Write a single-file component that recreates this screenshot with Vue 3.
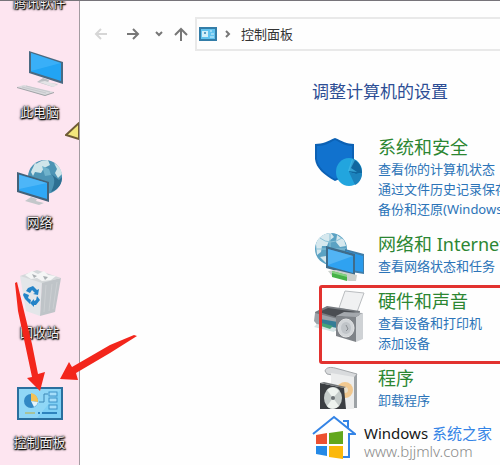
<template>
  <div class="screen">
    <!-- 桌面图标 -->
    <aside class="desktop">
      <a class="shortcut" href="#">腾讯软件</a>
      <a class="shortcut" href="#">
        <svg class="pic" viewBox="0 0 46 46">
          <path d="M12 1 46 12V34L12 23Z" fill="#4a6a82" />
          <path d="M14 3 44 13V31L14 21.500Z" fill="#22a4f4" />
          <path d="M14 3 44 13 14 21Z" fill="#4ab8fa" opacity=".6" />
          <path d="M26 28 32 30 31 33 41 34 36 37 20 32Z" fill="#bcbfc3" />
          <path d="M22 32 28 31 41 35 36 37Z" fill="#e4e4e6" />
          <path d="M7 35 37 42 28 46 0 37Z" fill="#d9dadd" />
          <path d="M0 37 28 45 37 42V43L28 46 0 38Z" fill="#9fa2a6" />
          <path d="M5 37 29 43M9 36 33 42" stroke="#c6c8cc" fill="none" />
        </svg>
        此电脑
      </a>
      <a class="shortcut" href="#">
        <svg class="pic" viewBox="0 0 46 46">
          <circle cx="28" cy="17" r="17" fill="#4d94b5" />
          <path d="M14 12C17 3 24 0 31 0L33 5 27 8 24 13 18 12 16 16ZM37 3C42 6 44 9 45 14L41 18 38 13 40 9ZM18 3 24 6 20 11 15 10Z" fill="#cfe5ea" />
          <path d="M33 13C38 17 39 22 34 32 42 29 45 24 45 17L42 20Z" fill="#2e6f92" />
          <path d="M25 6 32 9 34 15 28 16Z" fill="#70b3cc" />
          <path d="M0 12 32 22V42L0 32Z" fill="#436279" />
          <path d="M2 14.500 30 23V39L2 30.500Z" fill="#2fa8f5" />
          <path d="M2 15 30 23 2 29Z" fill="#62bffa" opacity=".6" />
          <path d="M14 37 20 39 19 41 27 43 22 45 8 41Z" fill="#c3c7ca" />
        </svg>
        网络
      </a>
      <a class="shortcut" href="#">
        <svg class="pic" viewBox="0 0 46 46">
          <path d="M3 6 25 12 23 46 9 41Z" fill="#e3e6e9" />
          <path d="M25 12 44 8 38 42 23 46Z" fill="#bfc4c8" />
          <path d="M3 6 20 0 44 8 25 13Z" fill="#d4d8da" />
          <path d="M8 5 15 1 21 4 27 1 31 5 39 6 34 10 25 11 20 8 14 9Z" fill="#f5f6f6" />
          <path d="M15 4 20 6 17 8ZM26 6 31 7 28 10Z" fill="#a9afb2" />
          <path d="M29 15 27 42M35 14 32 41M40 12 36 39" stroke="#cbcfd2" />
          <g fill="#2484c8">
            <path d="M11 18 16 16 20 20 22 19 21 25 16 24 18 23 15 20 13 23 9 21Z" />
            <path d="M7 23 12 25 11 28 14 30 13 34 8 29 6 25Z" />
            <path d="M20 26 23 30 19 35 17 35V37L13 33 17 29V31L19 30Z" />
          </g>
        </svg>
        回收站
      </a>
      <a class="shortcut" href="#">
        <svg class="pic" viewBox="0 0 46 46">
          <rect x="1" y="8" width="44" height="31" fill="#7fd0f5" stroke="#2a6f9e" stroke-width="2" />
          <path d="M2 9H44L20 38H2Z" fill="#a1def8" opacity=".5" />
          <circle cx="14" cy="21" r="7" fill="#3288c4" />
          <path d="M14 21V13A8 8 0 0 1 21 22Z" fill="#f4c255" />
          <path d="M14 21 21 22A7 7 0 0 1 17 27Z" fill="#e5f4fa" />
          <path d="M22 22H27V14H31" fill="none" stroke="#3c87b5" />
          <g fill="#a5defa" stroke="#3d92c8">
            <rect x="32" y="12" width="8" height="4" />
            <rect x="32" y="18" width="8" height="4" />
            <rect x="32" y="25" width="8" height="4" />
          </g>
          <path d="M8 33H18" stroke="#a8c39a" stroke-width="2" />
          <path d="M21 33H23M25 33H40" stroke="#2d83bd" stroke-width="2" />
        </svg>
        控制面板
      </a>
      <svg class="corner" viewBox="0 0 14 18">
        <path d="M1 13 14 1V17Z" fill="#f3e67c" stroke="#6f5b36" stroke-width="2" />
      </svg>
    </aside>

    <!-- 控制面板窗口 -->
    <main class="window">
      <nav class="toolbar">
        <button class="tool back" aria-label="后退">
          <svg viewBox="0 0 14 14"><path d="M13 7H2M7 2 2 7 7 12" /></svg>
        </button>
        <button class="tool forward" aria-label="前进">
          <svg viewBox="0 0 14 14"><path d="M1 7H12M7 2 12 7 7 12" /></svg>
        </button>
        <button class="tool recent" aria-label="最近位置">
          <svg viewBox="0 0 14 14"><path d="M4 5 7 8 10 5" /></svg>
        </button>
        <button class="tool up" aria-label="上移">
          <svg viewBox="0 0 14 14"><path d="M7 14V2M1 8 7 2 13 8" /></svg>
        </button>
        <div class="address">
          <svg class="mini" viewBox="0 0 18 14">
            <rect x="1" y="1" width="16" height="12" fill="#62c3ef" stroke="#337da8" stroke-width="2" />
            <rect x="3" y="4" width="6" height="6" fill="#d3eff9" />
            <circle cx="6" cy="6" r="1" fill="#3480b0" />
            <path d="M11 4H13M12 7H15M11 10H15" stroke="#d3f0fc" />
          </svg>
          <svg class="sep" viewBox="0 0 6 8"><path d="M1 1 4 4 1 7" /></svg>
          <a class="crumb" href="#">控制面板</a>
        </div>
      </nav>

      <section class="content">
        <h1 class="heading">调整计算机的设置</h1>
        <div
          v-for="item in categories"
          :key="item.icon"
          class="category"
          :class="{ marked: item.marked }"
        >
          <svg v-if="item.icon === 'shield'" class="icon" viewBox="0 0 52 54">
            <path d="M1 9C9 9 14 6 21 3 28 6 33 9 40 9V25C40 34 32 42 21 46 10 40 2 33 1 24Z" fill="#0c61b4" />
            <path d="M3 11C11 11 15 8 21 5 27 8 32 11 38 11V25C38 33 31 40 21 44 11 38 4 32 3 24Z" fill="#1172ce" />
            <ellipse cx="35" cy="37" rx="13" ry="14" fill="#22a5de" />
            <path d="M35 37 39 24C44 26 48 31 48 38L42 39Z" fill="#10679f" />
            <path d="M35 37 42 39 48 38C48 44 45 48 41 50Z" fill="#1c83bd" />
            <path d="M34 36 38 24 41 25 37 33 43 37Z" fill="#46bce9" opacity=".7" />
          </svg>

          <svg v-else-if="item.icon === 'network'" class="icon" viewBox="0 0 52 54">
            <circle cx="17" cy="17" r="16" fill="#5ba2c3" />
            <path d="M2 12C4 5 10 1 17 1L20 5 15 9 13 14 8 14 7 20 3 23ZM23 3 30 8 32 14 26 15 22 10ZM6 25 12 24 15 29 13 32Z" fill="#d6e8ee" />
            <path d="M16 2V32M2 17H32M6 6Q16 14 28 6" fill="none" stroke="#8dc3d8" />
            <path d="M31 17 50 22V42L31 39Z" fill="#407da8" />
            <path d="M32 19 49 24V40L32 37Z" fill="#2a9aeb" />
            <path d="M12 14 41 22V44L12 36Z" fill="#3f6c8b" />
            <path d="M14 17 39 24V41L14 34Z" fill="#2fa2f1" />
            <path d="M14 17 39 24 14 33Z" fill="#6abff7" opacity=".6" />
            <path d="M14 39 22 38 43 43 42 49 35 49 18 44Z" fill="#cbd0cc" />
            <path d="M18 39 33 43V49L18 45Z" fill="#46b248" />
            <path d="M18 39 33 43V45L18 41Z" fill="#87d284" />
          </svg>

          <svg v-else-if="item.icon === 'printer'" class="icon" viewBox="0 0 52 54">
            <path d="M31 2 50 4 43 23 25 19Z" fill="#f0f1f2" stroke="#babdc0" />
            <path d="M1 23 13 17 46 22 45 30 25 36 2 30Z" fill="#777b80" />
            <path d="M5 23 14 19 42 23 25 29Z" fill="#4a4d52" />
            <path d="M1 24 24 30V42L5 38 0 32Z" fill="#9ca3a9" />
            <path d="M6 30 24 33V40L9 37Z" fill="#337c96" />
            <path d="M3 35 23 39 20 43 0 38Z" fill="#d5e3e4" />
            <path d="M8 34 19 37 16 40 7 37Z" fill="#46a478" />
            <path d="M22 27 42 28V53L22 47Z" fill="#7f8388" />
            <path d="M42 28 49 24V50L42 53Z" fill="#cfd2d5" />
            <path d="M22 27 30 23 49 24 42 28Z" fill="#a4a8ad" />
            <ellipse cx="32" cy="39" rx="8" ry="9" fill="#d3d6d9" stroke="#e5e6e7" />
            <ellipse cx="32" cy="39" rx="5" ry="6" fill="#c0c4c8" />
            <path d="M32 36 34 40 32 42" fill="none" stroke="#888c91" />
          </svg>

          <svg v-else class="icon short" viewBox="0 0 48 43">
            <path d="M7 5C8 1 13 1 17 2L39 8 36 13 9 8Z" fill="#d9dbdd" stroke="#a4a7aa" />
            <path d="M13 7 36 11V43H13Z" fill="#eceded" />
            <path d="M36 11 39 8V42H36Z" fill="#9da2a6" />
            <circle cx="27" cy="24" r="8" fill="#f1c88f" />
            <circle cx="27" cy="24" r="3" fill="#eadfc9" />
            <path d="M2 17 26 22 28 43H2Z" fill="#3b3e42" />
            <path d="M2 17 6 16 28 21 26 22Z" fill="#73777a" />
            <ellipse cx="15" cy="32" rx="9" ry="11" fill="#c6cdcb" />
            <path d="M15 32 9 24C13 20 18 21 21 25Z" fill="#eef3ef" />
            <path d="M15 32 21 40C18 43 12 44 9 40Z" fill="#eef3ef" />
            <circle cx="15" cy="32" r="2" fill="#6c7275" />
          </svg>

          <div class="texts">
            <h2 class="title"><a href="#">{{ item.title }}</a></h2>
            <a v-for="link in item.links" :key="link" class="link" href="#">{{ link }}</a>
          </div>
        </div>

        <footer class="brand">
          <svg class="logo" viewBox="0 0 44 44">
            <path d="M1 19 22 2 43 19H37V42H25" fill="none" stroke="#3484e6" stroke-width="2" />
            <path d="M31 6H36V14" fill="none" stroke="#3484e6" stroke-width="2" />
            <path d="M4 20 15 18V29H4Z" fill="#ed5030" />
            <path d="M17 18 31 16V29H17Z" fill="#62a71c" />
            <path d="M4 31H15V41L4 39Z" fill="#2489e6" />
            <path d="M17 31H31V44L17 42Z" fill="#fbb80b" />
          </svg>
          <div class="brand-text">
            <p class="brand-name">Windows <span>系统之家</span></p>
            <p class="brand-url">www.bjjmlv.com</p>
          </div>
        </footer>
      </section>
    </main>

    <!-- 红色箭头标注 -->
    <svg class="arrows" viewBox="0 0 140 120">
      <path d="M15 3 17 2 24 31 32 64 38 94 45 92 40 111 27 98 32 97 25 64 18 31Z" />
      <path d="M137 56 110 73 76 93 78 100 60 99 69 82 72 87 110 65 134 55Z" />
    </svg>
  </div>
</template>

<script setup>
const categories = [
  {
    icon: 'shield',
    title: '系统和安全',
    links: ['查看你的计算机状态', '通过文件历史记录保存你的文件备份副本', '备份和还原(Windows 7)'],
  },
  {
    icon: 'network',
    title: '网络和 Internet',
    links: ['查看网络状态和任务'],
  },
  {
    icon: 'printer',
    title: '硬件和声音',
    links: ['查看设备和打印机', '添加设备'],
    marked: true,
  },
  {
    icon: 'program',
    title: '程序',
    links: ['卸载程序'],
  },
];
</script>

<style>
body {
  margin: 0;
}
</style>

<style scoped>
* {
  box-sizing: border-box;
}

.screen {
  position: relative;
  display: flex;
  min-height: 100vh;
  overflow: hidden;
  border-top: 1px solid #77747a;
  background-color: #fefefe;
  font-family: "Noto Sans", "Noto Sans CJK SC", sans-serif;
  font-size: 13px;
  line-height: 20px;
}

a {
  color: inherit;
  text-decoration: none;
}

/* 左侧桌面 */
.desktop {
  position: relative;
  display: flex;
  flex: 0 0 80px;
  flex-direction: column;
  gap: 40px;
  border-right: 1px solid #a39ba1;
  background-color: #fde5f0;
}

.shortcut {
  display: flex;
  flex-direction: column;
  align-items: center;
  gap: 8px;
  color: #f4f0f2;
  line-height: 16px;
  white-space: nowrap;
  text-shadow: 0 0 1px #000, 1px 1px 1px #000, 0 0 2px #222, 0 1px 2px #333, 0 0 3px #555;
}

.shortcut:first-child {
  margin-top: -7px;
}

.pic {
  width: 46px;
  height: 46px;
}

.corner {
  position: absolute;
  top: 121px;
  right: 0;
  width: 14px;
  height: 18px;
}

/* 右侧窗口 */
.window {
  flex: 1;
  min-width: 0;
}

.toolbar {
  display: flex;
  align-items: center;
  padding: 16px 0 0 14px;
}

.tool {
  padding: 0;
  border: 0;
  background: none;
  height: 14px;
}

.tool svg {
  display: block;
  width: 14px;
  height: 14px;
  fill: none;
  stroke: #777;
  stroke-width: 2;
}

.back svg {
  stroke: #d6d6d6;
}

.forward {
  margin-left: 18px;
}

.recent {
  margin-left: 12px;
}

.up {
  margin-left: 8px;
}

.address {
  display: flex;
  flex: 1;
  align-items: center;
  height: 34px;
  margin-left: 7px;
  padding-left: 2px;
  border: 2px solid #e9e9e9;
  border-right: 0;
}

.mini {
  width: 18px;
  height: 14px;
}

.sep {
  width: 6px;
  height: 8px;
  margin: 0 10px 0 8px;
  fill: none;
  stroke: #777;
  stroke-width: 2;
}

.crumb {
  color: #333;
}

.content {
  display: flex;
  flex-direction: column;
  gap: 13px;
  padding: 28px 0 4px 234px;
  white-space: nowrap;
}

.heading {
  margin: 0 0 17px -2px;
  color: #2c4d94;
  font-size: 17px;
  font-weight: 400;
  line-height: 26px;
}

.category {
  position: relative;
  display: flex;
  gap: 12px;
}

.icon {
  flex: none;
  align-self: flex-start;
  width: 52px;
  height: 54px;
  margin-bottom: -10px;
}

.short {
  height: 43px;
  padding-left: 4px;
}

.texts {
  display: flex;
  flex-direction: column;
  align-items: flex-start;
}

.title {
  margin: 0;
  color: #2c8632;
  font-size: 18px;
  font-weight: 400;
  line-height: 24px;
}

.link {
  color: #2c74b8;
}

/* 红框标记 */
.marked::after {
  position: absolute;
  top: -4px;
  right: -8px;
  bottom: -11px;
  left: 5px;
  border: 3px solid #e2322f;
  border-radius: 3px;
  content: "";
  pointer-events: none;
}

/* 底部站点标识 */
.brand {
  display: flex;
  gap: 8px;
  margin: -8px 0 0 -2px;
}

.logo {
  flex: none;
  width: 44px;
  height: 44px;
}

.brand-text {
  padding-top: 8px;
}

.brand-text p {
  margin: 0;
}

.brand-name {
  color: #161616;
  font-size: 15px;
}

.brand-name span {
  color: #3484e6;
}

.brand-url {
  color: #8a8a8a;
  font-weight: 300;
  font-size: 15px;
  line-height: 16px;
}

.arrows {
  position: absolute;
  top: 279px;
  left: 0;
  width: 140px;
  height: 120px;
  fill: #f3261c;
  pointer-events: none;
}
</style>
